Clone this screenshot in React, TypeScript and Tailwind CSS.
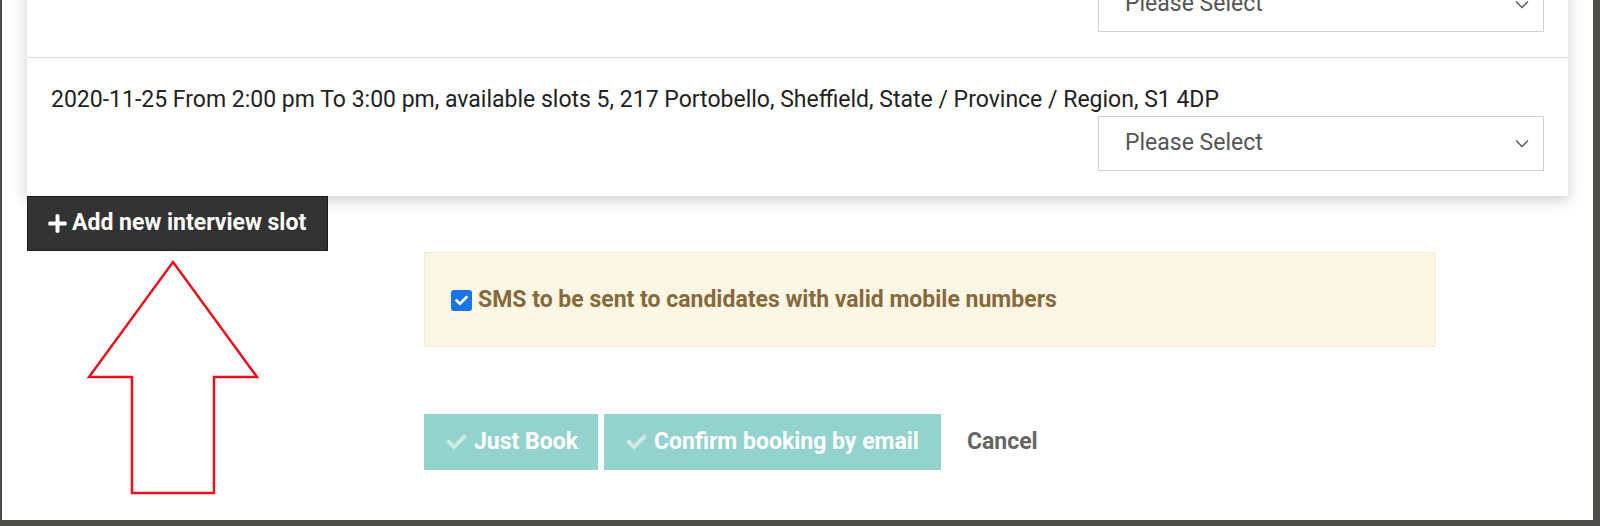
import { FaCheck, FaPlus } from "react-icons/fa";

const slots = [
  { id: 1, label: "2020-11-25 From 10:00 am To 11:00 am, available slots 5, 217 Portobello, Sheffield, State / Province / Region, S1 4DP" },
  { id: 2, label: "2020-11-25 From 2:00 pm To 3:00 pm, available slots 5, 217 Portobello, Sheffield, State / Province / Region, S1 4DP" },
];

function SlotSelect() {
  return (
    <div className="ml-auto flex h-[55px] w-[446px] items-center justify-between border border-[#d2d2d2] bg-white pl-[26px] pr-[14px] text-[23px] text-[#555]">
      <span>Please Select</span>
      <svg width="14" height="9" viewBox="0 0 14 9" fill="none">
        <path d="M1 1.5l6 6 6-6" stroke="#555" strokeWidth="1.3" />
      </svg>
    </div>
  );
}

export default function App() {
  return (
    <div className="relative h-[526px] w-[1600px] overflow-hidden bg-[#4d4d4a] font-['Roboto',sans-serif]">
      <div className="ml-[2px] h-[520px] w-[1591px] overflow-hidden bg-white">
        {/* slot list card */}
        <div className="-mt-[81px] ml-[25px] w-[1541px] bg-white shadow-[0_4px_14px_rgba(0,0,0,0.2)]">
          {slots.map((s, i) => (
            <div
              key={s.id}
              className={`pl-[24px] pr-[24px] pt-[25px] pb-[25px] ${i > 0 ? "border-t border-[#dcdcdc]" : ""}`}
            >
              <div className="text-[23px] leading-[33px] text-[#222]">{s.label}</div>
              <div className="flex">
                <SlotSelect />
              </div>
            </div>
          ))}
        </div>

        <button className="ml-[25px] flex h-[55px] items-center gap-[4px] border border-[#1c1c1c] bg-[#333] pl-[19px] pr-[21px] text-[23px] font-bold text-white">
          <FaPlus className="h-[21px] w-[21px]" />
          Add new interview slot
        </button>

        <div className="ml-[422px] mt-[1px] w-[1012px]">
          <div className="flex h-[95px] items-center gap-[6px] border border-[#f6ecd2] bg-[#fcf7e4] pl-[26px] pt-[1px]">
            <span className="flex h-[21px] w-[21px] items-center justify-center rounded-[3px] bg-[#1a73e8]">
              <FaCheck className="h-[13px] w-[13px] text-white" />
            </span>
            <span className="text-[23px] font-bold text-[#86693c]">
              SMS to be sent to candidates with valid mobile numbers
            </span>
          </div>

          <div className="mt-[67px] flex items-center gap-[6px]">
            <button className="flex h-[56px] items-center gap-[6px] bg-[#94d2cd] pl-[21px] pr-[20px] text-[23px] font-bold text-white">
              <FaCheck className="h-[20px] w-[23px] text-[#cdeae7]" />
              Just Book
            </button>
            <button className="flex h-[56px] items-center gap-[6px] bg-[#94d2cd] pl-[21px] pr-[22px] text-[23px] font-bold text-white">
              <FaCheck className="h-[20px] w-[23px] text-[#cdeae7]" />
              Confirm booking by email
            </button>
            <button className="ml-[20px] text-[23px] font-bold text-[#666]">Cancel</button>
          </div>
        </div>
      </div>

      {/* red annotation arrow */}
      <svg className="absolute left-0 top-0" width="300" height="526" viewBox="0 0 300 526" fill="none">
        <path
          d="M173 262 L257 377 L214 377 L214 493 L132 493 L132 377 L89 377 Z"
          stroke="#e8101c"
          strokeWidth="2.5"
          strokeLinejoin="miter"
        />
      </svg>
    </div>
  );
}
